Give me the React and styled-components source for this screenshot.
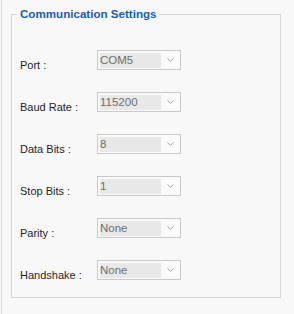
import React from 'react'
import styled, { createGlobalStyle } from 'styled-components'

const GlobalStyle = createGlobalStyle`
      html, body {
            margin: 0;
            padding: 0;
            background: #f8f8f8;
      }
      * {
            box-sizing: border-box;
      }
`

const Page = styled.div`
      margin-left: 1px;
      border-left: 1px solid #dcdcdc;
      height: 314px;
      padding: 7px 0 0 9px;
      font-family: 'Liberation Sans', Arial, sans-serif;
`

const GroupBox = styled.fieldset`
      width: 270px;
      margin: 0;
      padding: 29px 8px 17px 8px;
      border: 1px solid #d6d6d6;
`

const Title = styled.legend`
      margin-left: -3px;
      padding: 0 2px 0 3px;
      font-size: 11.6px;
      line-height: 14px;
      font-weight: bold;
      color: #1a5bbd;
`

const Rows = styled.div`
      display: grid;
      grid-auto-rows: 20px;
      row-gap: 22px;
`

const Row = styled.div`
      display: flex;
      align-items: flex-start;
`

const Label = styled.span`
      width: 77px;
      padding-top: 8px;
      font-size: 11px;
      line-height: 14px;
      color: #1e1e1e;
`

const Combo = styled.div`
      width: 84px;
      height: 20px;
      border: 1px solid #c9c9c9;
      background: #fafafa;
      display: flex;
      align-items: center;
      padding: 0 6px 0 2px;
      gap: 6px;
`

const Field = styled.span`
      width: 62px;
      height: 15px;
      background: #e8e8e8;
      color: #6e6e6e;
      font-size: 11.5px;
      line-height: 14px;
`

const Chevron = () => (
      <svg width='7' height='4' viewBox='0 0 7 4'>
            <path d='M0.5 0.5 L3.5 3.5 L6.5 0.5' fill='none' stroke='#a8a8a8' strokeWidth='1' />
      </svg>
)

const settings = [
      { label: 'Port :', value: 'COM5' },
      { label: 'Baud Rate :', value: '115200' },
      { label: 'Data Bits :', value: '8' },
      { label: 'Stop Bits :', value: '1' },
      { label: 'Parity :', value: 'None' },
      { label: 'Handshake :', value: 'None' },
]

const App = () => {
      return (
            <Page>
                  <GlobalStyle />
                  <GroupBox>
                        <Title>Communication Settings</Title>
                        <Rows>
                              {settings.map((s) => (
                                    <Row key={s.label}>
                                          <Label>{s.label}</Label>
                                          <Combo>
                                                <Field>{s.value}</Field>
                                                <Chevron />
                                          </Combo>
                                    </Row>
                              ))}
                        </Rows>
                  </GroupBox>
            </Page>
      )
}

export default App
